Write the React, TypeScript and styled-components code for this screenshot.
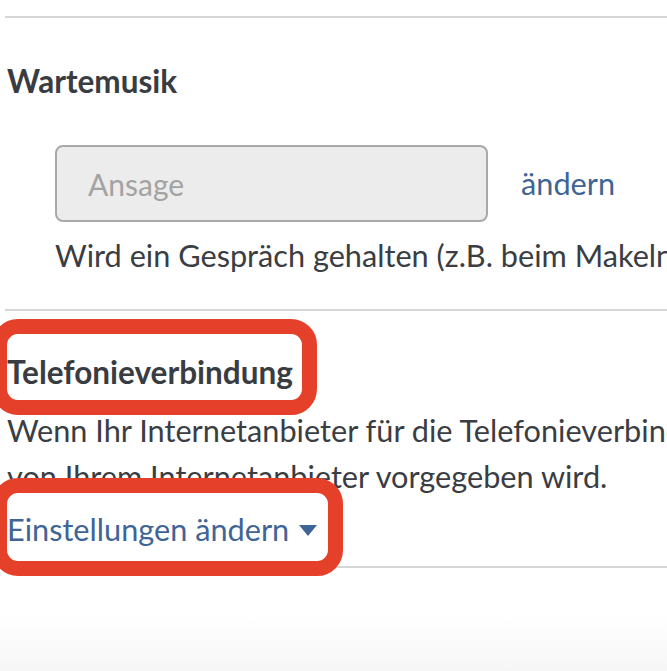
import React from 'react';
import styled, { createGlobalStyle } from 'styled-components';

const GlobalStyle = createGlobalStyle`
  html, body {
    margin: 0;
    padding: 0;
    background: #ffffff;
    overflow: hidden;
  }
  body {
    font-family: Lato, 'Open Sans', sans-serif;
    color: #3a3d42;
  }
`;

const Page = styled.div`
  width: 667px;
  height: 671px;
  overflow: hidden;
  display: flex;
  flex-direction: column;
  padding: 16px 0 0 7px;
  box-sizing: border-box;
`;

const Divider = styled.div<{ $top: number }>`
  height: 2px;
  background: #d6d6d6;
  margin: ${(p) => p.$top}px 0 0 -2px;
  width: 900px;
  flex-shrink: 0;
`;

const Heading = styled.h3<{ $top: number }>`
  position: relative;
  align-self: flex-start;
  margin: ${(p) => p.$top}px 0 0;
  font-size: 31.5px;
  line-height: 40px;
  font-weight: 700;
  color: #393c41;
  white-space: nowrap;
`;

const FieldRow = styled.div`
  display: flex;
  align-items: center;
  margin: 44px 0 0 48px;
`;

const Field = styled.input`
  width: 433px;
  height: 77px;
  box-sizing: border-box;
  border: 2px solid #a9a9a9;
  border-radius: 8px;
  background: #ececec;
  padding: 0 31px;
  font-family: Lato, 'Open Sans', sans-serif;
  font-size: 30px;
  color: #3a3d42;
  outline: none;

  &::placeholder {
    color: #a3a3a3;
  }
`;

const TextLink = styled.a`
  font-size: 30.7px;
  line-height: 40px;
  color: #3f6496;
  text-decoration: none;
  white-space: nowrap;
  cursor: pointer;
`;

const ChangeLink = styled(TextLink)`
  margin-left: 33px;
`;

const Hint = styled.p`
  margin: 14px 0 0 48px;
  font-size: 30.7px;
  line-height: 40px;
  white-space: nowrap;
`;

const Body = styled.p`
  margin: 16px 0 0;
  font-size: 30.7px;
  line-height: 46px;
  white-space: nowrap;
`;

const Line = styled.span`
  display: block;
`;

const ToggleWrap = styled.div`
  position: relative;
  align-self: flex-start;
  margin-top: 10px;
  display: flex;
  align-items: center;
  gap: 10px;
`;

const Caret = styled.svg`
  width: 18px;
  height: 11px;
  fill: #3f6496;
`;

const Marker = styled.div<{ $left: number; $top: number; $width: number; $height: number }>`
  position: absolute;
  left: ${(p) => p.$left}px;
  top: ${(p) => p.$top}px;
  width: ${(p) => p.$width}px;
  height: ${(p) => p.$height}px;
  box-sizing: border-box;
  border: 15px solid #e5412a;
  border-radius: 26px;
  pointer-events: none;
`;

const Fade = styled.div`
  flex: 1;
  margin-left: -7px;
  background: linear-gradient(to bottom, #ffffff 45%, #f6f6f6 100%);
`;

export default function App() {
  return (
    <>
      <GlobalStyle />
      <Page>
        <Divider $top={0} />
        <Heading $top={43}>Wartemusik</Heading>
        <FieldRow>
          <Field placeholder="Ansage" readOnly />
          <ChangeLink>ändern</ChangeLink>
        </FieldRow>
        <Hint>Wird ein Gespräch gehalten (z.B. beim Makeln), hört der Gesprächspartner diese Ansage.</Hint>
        <Divider $top={33} />
        <Heading $top={41}>
          Telefonieverbindung
          <Marker $left={-15} $top={-33} $width={325} $height={96} />
        </Heading>
        <Body>
          <Line>Wenn Ihr Internetanbieter für die Telefonieverbindung eigene Einstellungen vorsieht,</Line>
          <Line>von Ihrem Internetanbieter vorgegeben wird.</Line>
        </Body>
        <ToggleWrap>
          <TextLink>Einstellungen ändern</TextLink>
          <Caret viewBox="0 0 18 11">
            <polygon points="0,0 18,0 9,11" />
          </Caret>
          <Marker $left={-15} $top={-32} $width={351} $height={98} />
        </ToggleWrap>
        <Divider $top={16} />
        <Fade />
      </Page>
    </>
  );
}
